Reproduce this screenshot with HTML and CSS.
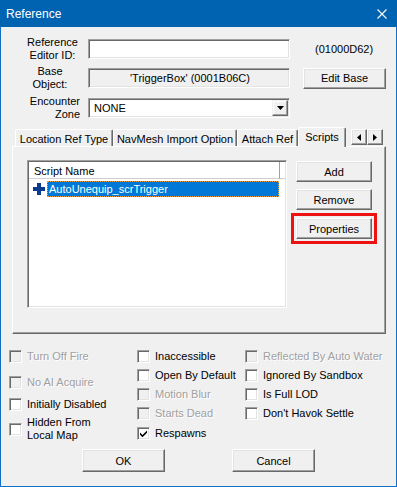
FILE: index.html
```html
<!DOCTYPE html>
<html>
<head>
<meta charset="utf-8">
<title>Reference</title>
<link rel="stylesheet" href="styles.css">
</head>
<body>
<div class="window">
  <div class="titlebar">
    <span class="title">Reference</span>
    <svg class="close" width="10" height="10" viewBox="0 0 10 10"><path d="M0.5 0.5L9.5 9.5M9.5 0.5L0.5 9.5" stroke="#fff" stroke-width="1.1" fill="none"/></svg>
  </div>
  <div class="client">
    <div class="row r1">
      <div class="lbl l1">Reference<br>Editor ID:</div>
      <div class="field"></div>
      <div class="formid">(01000D62)</div>
    </div>
    <div class="row r2">
      <div class="lbl l2">Base<br>Object:</div>
      <div class="field ro">'TriggerBox' (0001B06C)</div>
      <div class="btn editbase">Edit Base</div>
    </div>
    <div class="row r3">
      <div class="lbl l3">Encounter<br>Zone</div>
      <div class="field combo">
        <span class="combotext">NONE</span>
        <div class="ddbtn"><svg width="7" height="4" viewBox="0 0 7 4"><path d="M0 0H7L3.5 4Z" fill="#000"/></svg></div>
      </div>
    </div>

    <div class="tabctl">
      <div class="tabs">
        <div class="tab t1">Location Ref Type</div>
        <div class="tab t2">NavMesh Import Option</div>
        <div class="tab t3">Attach Ref</div>
        <div class="tab sel">Scripts</div>
        <div class="spin">
          <div class="sbtn"><svg width="4" height="7" viewBox="0 0 4 7"><path d="M4 0V7L0 3.5Z" fill="#000"/></svg></div>
          <div class="sbtn"><svg width="4" height="7" viewBox="0 0 4 7"><path d="M0 0V7L4 3.5Z" fill="#000"/></svg></div>
        </div>
      </div>
      <div class="panel">
        <div class="list">
          <div class="lhead"><div class="hcol">Script Name</div><div class="hfill"></div></div>
          <div class="item">
            <svg class="plus" width="12" height="12" viewBox="0 0 12 12"><path d="M4 0H8V4H12V8H8V12H4V8H0V4H4Z" fill="#0d3a8c"/></svg>
            <span class="seltext">AutoUnequip_scrTrigger</span>
          </div>
        </div>
        <div class="sbtns">
          <div class="btn sb">Add</div>
          <div class="btn sb remove">Remove</div>
          <div class="btn sb props">Properties</div>
        </div>
      </div>
    </div>

    <div class="checks">
      <div class="col c1">
        <div class="cb dis"><span class="box"></span><span class="txt">Turn Off Fire</span></div>
        <div class="cb dis m13"><span class="box"></span><span class="txt">No AI Acquire</span></div>
        <div class="cb m9"><span class="box"></span><span class="txt">Initially Disabled</span></div>
        <div class="cb two m5"><span class="box"></span><span class="txt">Hidden From<br>Local Map</span></div>
      </div>
      <div class="col c2">
        <div class="cb"><span class="box"></span><span class="txt">Inaccessible</span></div>
        <div class="cb m6"><span class="box"></span><span class="txt">Open By Default</span></div>
        <div class="cb dis m6"><span class="box"></span><span class="txt">Motion Blur</span></div>
        <div class="cb dis m6"><span class="box"></span><span class="txt">Starts Dead</span></div>
        <div class="cb m7"><span class="box"><svg width="9" height="9" viewBox="0 0 9 9"><path d="M1 3.5L3.5 6L8 1.5V3.8L3.5 8.3L1 5.8Z" fill="#000"/></svg></span><span class="txt">Respawns</span></div>
      </div>
      <div class="col c3">
        <div class="cb dis"><span class="box"></span><span class="txt">Reflected By Auto Water</span></div>
        <div class="cb m6"><span class="box"></span><span class="txt">Ignored By Sandbox</span></div>
        <div class="cb m6"><span class="box"></span><span class="txt">Is Full LOD</span></div>
        <div class="cb m6"><span class="box"></span><span class="txt">Don't Havok Settle</span></div>
      </div>
    </div>

    <div class="footer">
      <div class="btn fb">OK</div>
      <div class="btn fb cancel">Cancel</div>
    </div>
  </div>
</div>
</body>
</html>
```

FILE: styles.css
```css
html, body {
  margin: 0;
  padding: 0;
  background: #f0f0f0;
}
body {
  font-family: "Liberation Sans", Arial, sans-serif;
  font-size: 11px;
  color: #000;
}
.window {
  width: 397px;
  height: 487px;
  display: flex;
  flex-direction: column;
  background: #f0f0f0;
}
.titlebar {
  height: 27px;
  flex: none;
  background: #0063b1;
  color: #fff;
  display: flex;
  align-items: center;
  justify-content: space-between;
  padding: 0 10px 0 6px;
  font-size: 12px;
}
.title {
  line-height: 14px;
}
.close {
  display: block;
}
.client {
  flex: 1;
  border: 1px solid #1170c4;
  border-top: 0;
  display: flex;
  flex-direction: column;
}
.row {
  display: flex;
  align-items: center;
  height: 26px;
}
.r1 { margin-top: 9px; }
.r2 { margin-top: 3px; }
.r3 { margin-top: 4px; }
.lbl {
  width: 79px;
  margin-right: 8px;
  box-sizing: border-box;
  line-height: 13px;
}
.l1 { text-align: center; padding-left: 24px; }
.l2 { text-align: center; padding-left: 19px; }
.l3 { text-align: right; }

.sunken, .field, .list, .box {
  box-sizing: border-box;
  border: 1px solid;
  border-color: #a0a0a0 #ffffff #ffffff #a0a0a0;
  box-shadow: inset 1px 1px 0 #696969, inset -1px -1px 0 #e3e3e3;
}
.field {
  width: 202px;
  height: 20px;
  background: #fff;
}
.ro {
  background: #f0f0f0;
  display: flex;
  align-items: center;
  justify-content: center;
  padding-left: 2px;
}
.formid {
  margin-left: 25px;
}
.btn {
  box-sizing: border-box;
  display: flex;
  align-items: center;
  justify-content: center;
  background: #f0f0f0;
  border: 1px solid;
  border-color: #ffffff #696969 #696969 #ffffff;
  box-shadow: inset -1px -1px 0 #a0a0a0, inset 1px 1px 0 #e3e3e3;
}
.editbase {
  margin-left: 13px;
  width: 83px;
  height: 21px;
}
.combo {
  display: flex;
  align-items: center;
  padding: 0 1px 0 5px;
}
.combotext {
  flex: 1;
}
.ddbtn {
  width: 16px;
  height: 16px;
  box-sizing: border-box;
  display: flex;
  align-items: center;
  justify-content: center;
  background: #f0f0f0;
  border: 1px solid;
  border-color: #f0f0f0 #696969 #696969 #f0f0f0;
  box-shadow: inset -1px -1px 0 #a0a0a0, inset 1px 1px 0 #ffffff;
}
.ddbtn svg { display: block; }

.tabctl {
  margin-left: 11px;
  margin-top: 5px;
  width: 374px;
}
.tabs {
  height: 20px;
  display: flex;
  align-items: flex-end;
  position: relative;
  z-index: 2;
}
.tab {
  box-sizing: border-box;
  height: 17px;
  padding-top: 2px;
  line-height: 14px;
  text-align: center;
  white-space: nowrap;
  border-top: 1px solid #ffffff;
  border-left: 1px solid #ffffff;
  border-right: 1px solid #696969;
  box-shadow: inset -1px 0 0 #a0a0a0;
  border-radius: 2px 2px 0 0;
  background: #f0f0f0;
}
.t1 { margin-left: 3px; width: 98px; }
.t2 { width: 124px; }
.t3 { width: 61px; }
.sel {
  width: 48px;
  height: 20px;
  margin-bottom: -1px;
}
.spin {
  margin-left: auto;
  margin-right: 3px;
  align-self: flex-start;
  margin-top: 3px;
  display: flex;
}
.sbtn {
  width: 16px;
  height: 16px;
  box-sizing: border-box;
  display: flex;
  align-items: center;
  justify-content: center;
  background: #f0f0f0;
  border: 1px solid;
  border-color: #ffffff #696969 #696969 #ffffff;
  box-shadow: inset -1px -1px 0 #a0a0a0, inset 1px 1px 0 #e3e3e3;
}
.sbtn svg { display: block; }
.panel {
  position: relative;
  z-index: 1;
  box-sizing: border-box;
  height: 188px;
  width: 374px;
  border: 1px solid;
  border-color: #ffffff #696969 #696969 #ffffff;
  box-shadow: inset -1px -1px 0 #a0a0a0;
  display: flex;
  align-items: flex-start;
  padding: 13px 0 0 14px;
}
.list {
  width: 260px;
  height: 148px;
  background: #fff;
  padding: 1px;
}
.lhead {
  display: flex;
  height: 17px;
}
.hcol {
  box-sizing: border-box;
  width: 251px;
  height: 17px;
  padding-left: 5px;
  padding-top: 3px;
  line-height: 13px;
  border-right: 1px solid #a0a0a0;
  border-bottom: 1px solid #d0d0d0;
}
.hfill {
  flex: 1;
  border-bottom: 1px solid #d0d0d0;
}
.item {
  margin-top: 2px;
  height: 16px;
  display: flex;
  align-items: center;
}
.plus {
  display: block;
  margin-left: 4px;
  margin-right: 2px;
}
.seltext {
  box-sizing: border-box;
  width: 232px;
  height: 16px;
  line-height: 14px;
  padding-left: 1px;
  background: #0078d7;
  color: #fff;
  border: 1px dotted #f0a040;
}
.sbtns {
  margin-left: 9px;
  margin-top: 1px;
  display: flex;
  flex-direction: column;
}
.sb {
  width: 76px;
  height: 21px;
}
.remove { margin-top: 7px; }
.props {
  margin-top: 8px;
  outline: 3px solid #ee1111;
  outline-offset: 2px;
}

.checks {
  margin-top: 16px;
  padding-left: 8px;
  display: flex;
  align-items: flex-start;
}
.c1 { width: 128px; }
.c2 { width: 108px; }
.cb {
  display: flex;
  align-items: center;
  height: 13px;
  line-height: 13px;
  white-space: nowrap;
}
.cb.two { height: 26px; }
.box {
  width: 13px;
  height: 13px;
  flex: none;
  background: #fff;
  margin-right: 5px;
  display: flex;
  align-items: center;
  justify-content: center;
}
.box svg { display: block; }
.dis .box { background: #f0f0f0; }
.dis .txt {
  color: #a0a0a0;
  text-shadow: 1px 1px 0 #ffffff;
}
.m5 { margin-top: 5px; }
.m6 { margin-top: 6px; }
.m7 { margin-top: 7px; }
.m9 { margin-top: 9px; }
.m13 { margin-top: 13px; }

.footer {
  margin-top: 7px;
  padding-left: 81px;
  display: flex;
}
.fb {
  width: 83px;
  height: 23px;
}
.cancel { margin-left: 67px; }
```
